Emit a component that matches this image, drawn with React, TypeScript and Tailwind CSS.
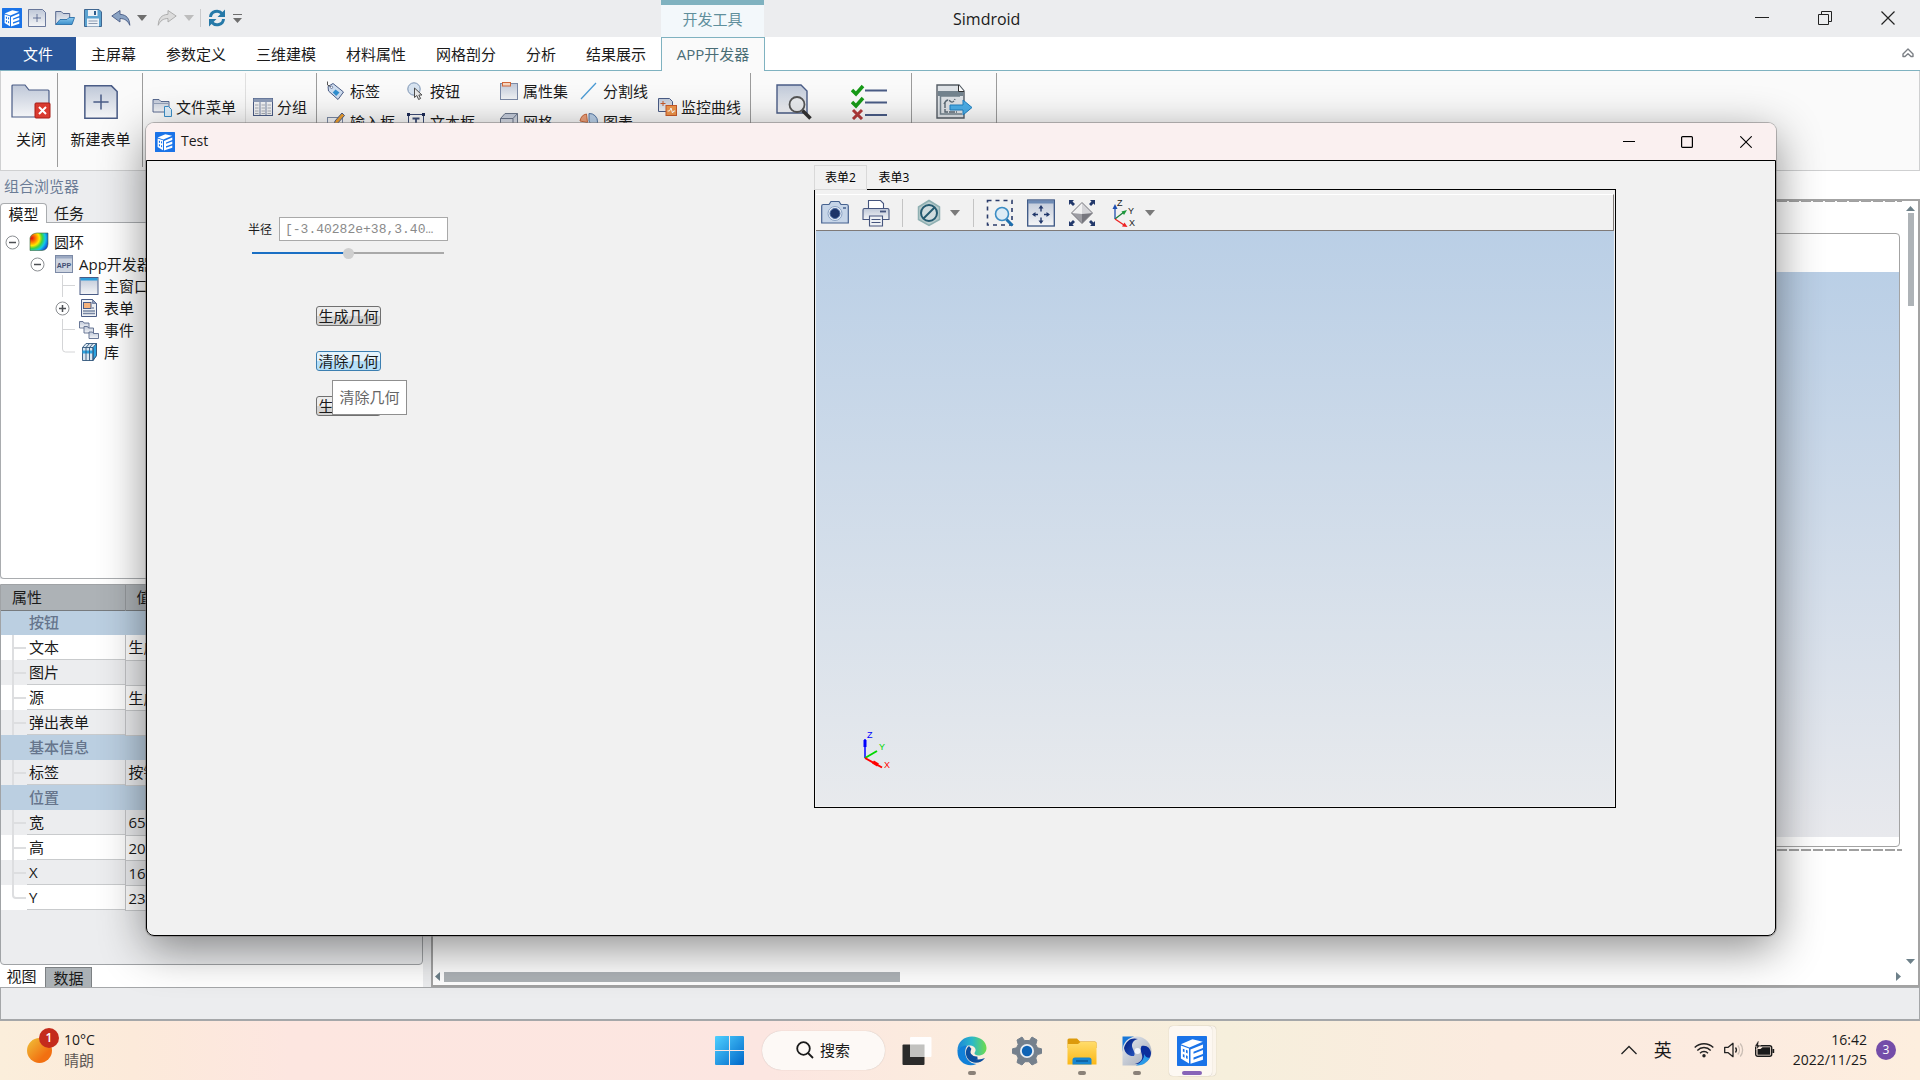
import type { ReactNode } from 'react'

type IconProps = { className?: string }

const NAVY = '#4a5c86'
const CAPTION = 'flex items-center justify-center'

const MENU = ['主屏幕', '参数定义', '三维建模', '材料属性', '网格剖分', '分析', '结果展示']

type PropRow = { name: string; value?: string; group?: boolean; white?: boolean; last?: boolean }

const PROPS: PropRow[] = [
  { name: '按钮', group: true },
  { name: '文本', value: '生成几何', white: true },
  { name: '图片', value: '' },
  { name: '源', value: '生成几何', white: true },
  { name: '弹出表单', value: '' },
  { name: '基本信息', group: true },
  { name: '标签', value: '按钮' },
  { name: '位置', group: true },
  { name: '宽', value: '65' },
  { name: '高', value: '20', white: true },
  { name: 'X', value: '16' },
  { name: 'Y', value: '23', white: true, last: true },
]

export default function App() {
  return (
    <div className="relative flex h-screen min-h-[900px] flex-col overflow-hidden bg-white font-['Open_Sans','Noto_Sans_CJK_SC',sans-serif] text-[15px] leading-5 text-[#1a1a1a]">
      <Gradients />
      <TitleBar />
      <MenuTabs />
      <Ribbon />
      <div className="flex min-h-0 flex-1">
        <Browser />
        <div className="w-[8px] shrink-0 bg-[#ecedef]" />
        <Designer />
      </div>
      <div className="h-[34px] shrink-0 border border-b-2 border-[#a5a7a9] bg-[#ecedef]" />
      <Taskbar />
      <TestWindow />
    </div>
  )
}

/* ---------- main window frame ---------- */

function TitleBar() {
  return (
    <header className="flex h-[37px] shrink-0 bg-[#ecedef]">
      <div className="flex w-[661px] shrink-0 items-center pb-px pl-[2px]">
        <Logo className="h-5 w-5" />
        <button aria-label="新建" className="ml-[5px]"><NewIcon className="h-5 w-5" /></button>
        <button aria-label="打开" className="ml-2"><OpenIcon className="h-5 w-5" /></button>
        <button aria-label="保存" className="ml-2"><SaveIcon className="h-5 w-5" /></button>
        <button aria-label="撤销" className="ml-2"><UndoIcon className="h-5 w-5" /></button>
        <button aria-label="撤销列表" className="ml-[6px]"><Caret className="h-[6px] w-[10px] text-[#6e6e6e]" /></button>
        <button aria-label="重做" className="ml-[10px]"><RedoIcon className="h-5 w-5" /></button>
        <button aria-label="重做列表" className="ml-[7px]"><Caret className="h-[6px] w-[10px] text-[#bdbdbd]" /></button>
        <span className="ml-[6px] h-[18px] w-px bg-[#c9cacc]" />
        <button aria-label="刷新" className="ml-[6px]"><RefreshIcon className="h-5 w-5" /></button>
        <button aria-label="自定义工具栏" className="ml-[6px] flex flex-col items-center gap-[3px]">
          <span className="h-px w-[9px] bg-[#6e6e6e]" />
          <Caret className="h-[5px] w-[9px] text-[#6e6e6e]" />
        </button>
      </div>
      <div className="flex w-[103px] shrink-0 items-center justify-center border-t-[5px] border-[#7fb2c0] bg-[#f3f8fb] pb-1 text-[#5f8f9c]">
        开发工具
      </div>
      <h1 className="flex-1 self-center pl-[189px] text-base">Simdroid</h1>
      <div className="flex pr-px pb-px">
        <button aria-label="最小化" className={`${CAPTION} w-[63px]`}>
          <svg viewBox="0 0 14 14" className="h-[14px] w-[14px]"><path d="M0 6.5h14" stroke="#222" /></svg>
        </button>
        <button aria-label="还原" className={`${CAPTION} w-[63px]`}>
          <svg viewBox="0 0 14 14" className="h-[14px] w-[14px]" fill="none" stroke="#222">
            <path d="M.5 3.5h10v10H.5zM3.5 3.5v-3h10v10h-3" />
          </svg>
        </button>
        <button aria-label="关闭窗口" className={`${CAPTION} w-[63px]`}>
          <svg viewBox="0 0 14 14" className="h-[14px] w-[14px]"><path d="M.5.5l13 13M13.5.5l-13 13" stroke="#222" strokeWidth="1.2" /></svg>
        </button>
      </div>
    </header>
  )
}

function MenuTabs() {
  return (
    <nav className="flex h-[34px] shrink-0 bg-white">
      <button className="w-[76px] border-b border-[#7fb2c0] bg-[#2b579a] text-white">文件</button>
      {MENU.map((m) => (
        <button key={m} className="border-b border-[#7fb2c0] px-[15px]">{m}</button>
      ))}
      <button className="w-[104px] border border-b-0 border-[#7fb2c0] bg-[#fafafa] pb-[2px] text-[#4a6d76]">APP开发器</button>
      <div className="flex flex-1 items-center justify-end border-b border-[#7fb2c0] pr-[6px] pb-[2px]">
        <button aria-label="收起功能区">
          <svg viewBox="0 0 12 10" className="h-[10px] w-3" fill="none" stroke="#7b7f85" strokeWidth="1.4">
            <path d="M1 6 6 1l5 5v2.5H9L6 5.800 3 8.500H1z" strokeLinejoin="round" />
          </svg>
        </button>
      </div>
    </nav>
  )
}

function Ribbon() {
  return (
    <div className="flex h-[100px] shrink-0 border border-t-0 border-[#cfd0d1] bg-[#fafafa] py-[2px]">
      <Group className="w-[57px] pl-1">
        <BigTool label="关闭" icon={<FolderCloseIcon className="h-9 w-10" />} />
      </Group>
      <Group className="w-[85px] pl-px">
        <BigTool label="新建表单" icon={<NewIcon className="h-[38px] w-[38px]" />} />
      </Group>
      <Group className="w-[174px]">
        <div className="flex h-[68px] w-[103px] items-center border-r border-[#e0e0e0] pl-[9px]">
          <Tool label="文件菜单" icon={<FileMenuIcon className="h-5 w-5" />} />
        </div>
        <div className="flex h-[68px] items-center pl-[7px]">
          <Tool label="分组" icon={<ColumnsIcon className="h-5 w-5" />} />
        </div>
      </Group>
      <Group className="w-[434px] pl-[9px]">
        <div className="grid h-[66px] auto-rows-[31px] grid-cols-[80px_93px_80px_78px] pt-[2px]">
          <Tool label="标签" icon={<TagIcon className="h-5 w-5" />} />
          <Tool label="按钮" icon={<PointerIcon className="h-5 w-5" />} />
          <Tool label="属性集" icon={<PropSetIcon className="h-5 w-5" />} />
          <Tool label="分割线" icon={<SplitLineIcon className="h-5 w-5" />} />
          <Tool label="输入框" icon={<InputIcon className="h-5 w-5" />} />
          <Tool label="文本框" icon={<TextBoxIcon className="h-5 w-5" />} />
          <Tool label="网格" icon={<MeshIcon className="h-5 w-5" />} />
          <Tool label="图表" icon={<ChartIcon className="h-5 w-5" />} />
        </div>
        <div className="flex h-[68px] items-center">
          <Tool label="监控曲线" icon={<MonitorIcon className="h-5 w-5" />} />
        </div>
      </Group>
      <Group className="w-[161px] px-[5px]">
        <BigTool title="预览" icon={<PreviewIcon className="h-9 w-9" />} />
        <BigTool title="检查" icon={<ChecklistIcon className="h-9 w-9" />} />
      </Group>
      <Group className="w-[85px]">
        <BigTool title="导出" icon={<ExportIcon className="h-9 w-9" />} />
      </Group>
    </div>
  )
}

function Group({ className, children }: { className: string; children: ReactNode }) {
  return <div className={`flex h-[94px] shrink-0 border-r border-[#9c9c9c] ${className}`}>{children}</div>
}

function BigTool({ label, title, icon }: { label?: string; title?: string; icon: ReactNode }) {
  return (
    <button aria-label={label ?? title} className="flex flex-1 flex-col items-center whitespace-nowrap pt-[9px]">
      <span className="flex h-10 items-center">{icon}</span>
      {label && <span className="mt-[7px]">{label}</span>}
    </button>
  )
}

function Tool({ label, icon }: { label: string; icon: ReactNode }) {
  return (
    <button className="flex items-center gap-1 whitespace-nowrap">
      {icon}
      {label}
    </button>
  )
}

/* ---------- left column ---------- */

function Browser() {
  return (
    <aside className="flex w-[423px] shrink-0 flex-col">
      <div className="flex min-h-0 flex-1 flex-col bg-[#ecedef]">
        <h2 className="flex h-8 items-center pb-[3px] pl-1 text-[#6b7c96]">组合浏览器</h2>
        <div className="flex h-5 shrink-0">
          <button className="w-[47px] rounded-t-sm border border-b-0 border-[#a9acaf] bg-white">模型</button>
          <button className="border-b border-[#a9acaf] px-[7px]">任务</button>
          <span className="flex-1 border-b border-[#a9acaf]" />
        </div>
        <ul className="min-h-0 flex-1 rounded-b-sm border border-t-0 border-[#a9acaf] bg-white pt-[8px]">
          <li className="flex h-[22px] items-center pl-1">
            <Expander open />
            <ContourIcon className="ml-[9px] h-5 w-5" />
            <span className="ml-[5px]">圆环</span>
          </li>
          <li className="flex h-[22px] items-center pl-[29px]">
            <Expander open />
            <AppIcon className="ml-[9px] h-5 w-5" />
            <span className="ml-[5px] whitespace-nowrap">App开发器</span>
          </li>
          <Leaf label="主窗口" icon={<WindowIcon className="h-5 w-5" />} />
          <li className="flex h-[22px] items-center pl-[54px]">
            <Expander />
            <FormIcon className="ml-[9px] h-5 w-5" />
            <span className="ml-[5px]">表单</span>
          </li>
          <Leaf label="事件" icon={<EventIcon className="h-5 w-5" />} />
          <Leaf label="库" last icon={<LibraryIcon className="h-5 w-5" />} />
        </ul>
      </div>
      <div className="mt-[5px] flex min-h-[381px] shrink-0 flex-col rounded-b-sm border border-[#a0a3a6] bg-[#ecedef]">
        <table className="w-full table-fixed border-collapse text-left">
          <thead>
            <tr className="h-[25px] border-b border-[#777b7e] bg-[#adb2b6]">
              <th className="w-[124px] border-r border-[#95999c] p-0 pl-[11px] font-normal">属性</th>
              <th className="p-0 pl-[11px] font-normal">值</th>
            </tr>
          </thead>
          <tbody>
            {PROPS.map((p) =>
              p.group ? (
                <tr key={p.name} className="h-[25px] bg-[#bbcfe1] text-[#66758c]">
                  <th colSpan={2} className="p-0 pb-px pl-7 font-medium">{p.name}</th>
                </tr>
              ) : (
                <tr key={p.name} className={p.white ? 'h-[25px] bg-white' : 'h-[25px] bg-[#ecedef]'}>
                  <td className="border-r border-[#c3c5c7] p-0">
                    <div className="flex h-[25px]">
                      <TreeLine last={p.last} />
                      <span className="flex flex-1 items-center border-b border-[#c9cbcd] pl-[2px]">{p.name}</span>
                    </div>
                  </td>
                  <td className="border-b border-[#c9cbcd] p-0 pl-[3px]">{p.value}</td>
                </tr>
              ),
            )}
          </tbody>
        </table>
      </div>
      <div className="flex h-[22px] shrink-0 bg-white">
        <button className="w-[45px] pr-[2px]">视图</button>
        <button className="mt-[2px] w-[47px] border border-b-0 border-[#7c8083] bg-[#abb1b5]">数据</button>
      </div>
    </aside>
  )
}

function TreeLine({ last }: { last?: boolean }) {
  return (
    <svg viewBox="0 0 26 25" className="h-[25px] w-[26px] shrink-0" fill="none" stroke="#dddee0" strokeWidth="2">
      {last ? <path d="M12 0v10q0 3 3 3h10" /> : <path d="M12 0v25M12 13h13" />}
    </svg>
  )
}

function Leaf({ label, icon, last }: { label: string; icon: ReactNode; last?: boolean }) {
  return (
    <li className="flex h-[22px] items-center pl-[60px]">
      <svg viewBox="0 0 16 22" className="h-[22px] w-4" fill="none" stroke="#d4d5d7">
        {last ? <path d="M1.500 0v8q0 3 3 3H14" /> : <path d="M1.500 0v22M1.500 10.500H14" />}
      </svg>
      <span className="ml-[2px]">{icon}</span>
      <span className="ml-[5px]">{label}</span>
    </li>
  )
}

function Expander({ open }: { open?: boolean }) {
  return (
    <button aria-label={open ? '折叠' : '展开'}>
      <svg viewBox="0 0 15 15" className="h-[15px] w-[15px]" fill="none">
        <circle cx="7.500" cy="7.500" r="6.500" fill="#fff" stroke="#8c8f93" />
        <path d={open ? 'M4 7.500h7' : 'M4 7.500h7M7.500 4v7'} stroke="#4c4f53" strokeWidth="1.500" />
      </svg>
    </button>
  )
}

/* ---------- form designer behind the dialog ---------- */

function Designer() {
  return (
    <main className="flex min-w-0 flex-1 flex-col bg-white pt-7">
      <div className="flex min-h-0 flex-1 flex-col border-2 border-[#a3a3a3]">
        <div className="flex min-h-0 flex-1">
          <div className="flex flex-1 flex-col">
            <div className="h-px bg-[repeating-linear-gradient(90deg,#a0a0a0_0_10px,transparent_10px_12px)]" />
            <div className="mt-[31px] mr-[2px] flex flex-1 flex-col rounded-sm border border-[#a3a3a3] bg-white pt-[38px] pb-[9px]">
              <div className="flex-1 bg-linear-to-b from-[#bacfe6] to-[#e8e9ed]" />
            </div>
            <div className="mt-[2px] mb-[117px] h-[2px] bg-[repeating-linear-gradient(90deg,#a0a0a0_0_10px,transparent_10px_12px)]" />
          </div>
          <div className="flex w-4 flex-col items-center pt-[5px] pb-1 pl-px">
            <Caret className="h-[5px] w-[9px] rotate-180 text-[#6d8089]" />
            <span className="mt-[2px] h-[93px] w-[6px] bg-[#aeb3b7]" />
            <Caret className="mt-auto h-[5px] w-[9px] text-[#6d8089]" />
          </div>
        </div>
        <div className="flex h-[17px] items-center justify-between pr-[15px]">
          <div className="flex items-center gap-[2px]">
            <Caret className="h-[5px] w-[9px] rotate-90 text-[#6d8089]" />
            <span className="h-[10px] w-[456px] bg-[#aeb3b7]" />
          </div>
          <Caret className="h-[5px] w-[9px] -rotate-90 text-[#6d8089]" />
        </div>
      </div>
    </main>
  )
}

/* ---------- Test dialog ---------- */

function TestWindow() {
  return (
    <section
      aria-label="Test"
      className="absolute top-[123px] right-[144px] bottom-[144px] left-[146px] flex flex-col rounded-lg bg-[#f1f1f1] shadow-[0_0_0_1px_rgba(120,115,115,0.5),0_12px_46px_rgba(0,0,0,0.46)]"
    >
      <div className="flex h-[37px] shrink-0 items-center rounded-t-lg bg-[#faf0f0] pl-[9px]">
        <Logo className="h-5 w-5" />
        <h2 className="ml-[6px] flex-1 pb-px text-sm">Test</h2>
        <button aria-label="最小化" className={`${CAPTION} h-full w-[58px]`}>
          <svg viewBox="0 0 12 12" className="h-3 w-3"><path d="M0 5.500h12" stroke="#000" /></svg>
        </button>
        <button aria-label="最大化" className={`${CAPTION} h-full w-[58px]`}>
          <svg viewBox="0 0 12 12" className="h-3 w-3"><rect x=".6" y=".6" width="10.800" height="10.800" rx="1" fill="none" stroke="#000" strokeWidth="1.200" /></svg>
        </button>
        <button aria-label="关闭" className={`${CAPTION} h-full w-[60px]`}>
          <svg viewBox="0 0 12 12" className="h-3 w-3"><path d="M.3.3l11.400 11.400M11.700.3.300 11.700" stroke="#000" strokeWidth="1.100" /></svg>
        </button>
      </div>
      <div className="flex min-h-0 flex-1 rounded-b-lg border border-black">
        <RadiusForm />
        <ViewTabs />
      </div>
    </section>
  )
}

function RadiusForm() {
  return (
    <form className="flex w-[667px] shrink-0 flex-col items-start pt-14 pl-[101px]">
      <div className="flex items-center gap-[7px]">
        <label htmlFor="radius" className="pt-px text-xs">半径</label>
        <input
          id="radius"
          readOnly
          value="[-3.40282e+38,3.40…"
          className="h-6 w-[169px] border border-[#a9a9a9] bg-white px-[5px] font-['Liberation_Mono','Noto_Sans_CJK_SC',monospace] text-[13px] text-[#8a8a8a]"
        />
      </div>
      <input
        type="range"
        aria-label="半径"
        defaultValue={50}
        className="mt-[6px] ml-1 h-3 w-48 appearance-none bg-[linear-gradient(90deg,#1a6fc4_50%,#a9a9a9_50%)] bg-[length:100%_2px] bg-center bg-no-repeat [&::-webkit-slider-thumb]:h-[11px] [&::-webkit-slider-thumb]:w-[11px] [&::-webkit-slider-thumb]:appearance-none [&::-webkit-slider-thumb]:rounded-full [&::-webkit-slider-thumb]:bg-[#cfcfcf]"
      />
      <div className="relative mt-[47px] ml-[68px] flex flex-col items-start gap-[25px]">
        <FormButton>生成几何</FormButton>
        <FormButton hot>清除几何</FormButton>
        <FormButton>生成网格</FormButton>
        <div role="tooltip" className="absolute top-[74px] left-4 flex h-[35px] w-[75px] items-center justify-center border border-[#8f8f8f] bg-white pb-[2px] whitespace-nowrap text-[#666]">
          清除几何
        </div>
      </div>
    </form>
  )
}

function FormButton({ hot, children }: { hot?: boolean; children: ReactNode }) {
  return (
    <button
      type="button"
      className={
        hot
          ? 'flex h-5 w-[65px] items-center justify-center rounded-[3px] border border-[#3c7fb1] bg-[linear-gradient(#e4f3fc_50%,#b5dff8_50%)] whitespace-nowrap'
          : 'flex h-5 w-[65px] items-center justify-center rounded-[3px] border border-[#707070] bg-[linear-gradient(#ededed_50%,#d3d3d3_50%)] whitespace-nowrap'
      }
    >
      {children}
    </button>
  )
}

function ViewTabs() {
  return (
    <div className="mt-1 mr-[159px] mb-[127px] flex min-w-0 flex-1 flex-col">
      <div className="flex h-[25px] shrink-0 text-xs text-black">
        <button className="w-[53px] border border-[#d9d9d9] pt-px">表单2</button>
        <button className="w-[54px] border-b border-black pt-[2px]">表单3</button>
        <span className="flex-1 border-b border-black" />
      </div>
      <div className="flex min-h-0 flex-1 flex-col border border-t-0 border-black px-px pt-1 pb-px">
        <div className="flex h-[37px] shrink-0 items-center border-t border-r border-b border-[#7f7a78] border-t-white pl-[5px]">
          <button aria-label="截图"><CameraIcon className="h-7 w-7" /></button>
          <button aria-label="打印" className="ml-[13px]"><PrinterIcon className="h-7 w-7" /></button>
          <span className="ml-3 h-7 w-px bg-[#c4c4c4]" />
          <button aria-label="隐藏" className="ml-3"><HideIcon className="h-7 w-7" /></button>
          <button aria-label="隐藏选项" className="ml-[7px]"><Caret className="h-[6px] w-[10px] text-[#7a7a7a]" /></button>
          <span className="ml-[13px] h-7 w-px bg-[#c4c4c4]" />
          <button aria-label="框选缩放" className="ml-3"><ZoomBoxIcon className="h-7 w-7" /></button>
          <button aria-label="适应窗口" className="ml-[13px]"><FitIcon className="h-7 w-7" /></button>
          <button aria-label="旋转" className="ml-[13px]"><ExpandIcon className="h-7 w-7" /></button>
          <button aria-label="视角" className="ml-[13px]"><AxesIcon className="h-7 w-7" /></button>
          <button aria-label="视角选项" className="ml-2"><Caret className="h-[6px] w-[10px] text-[#7a7a7a]" /></button>
        </div>
        <div className="flex flex-1 flex-col justify-end bg-linear-to-b from-[#bacfe6] to-[#e8eaed] pb-9 pl-[45px]">
          <svg viewBox="0 0 32 40" className="h-10 w-8 font-['Liberation_Sans',sans-serif]" fontSize="9">
            <path d="M4 28V9" stroke="#3c3cff" strokeWidth="2" />
            <path d="M4 17v-7" stroke="#00f" strokeWidth="3" />
            <path d="M4 28l12-7" stroke="#00d800" strokeWidth="2" />
            <path d="M4 28l17 9.500" stroke="#f00" strokeWidth="2" />
            <path d="M12 32l5 3" stroke="#f00" strokeWidth="3.500" />
            <text x="6" y="8" fill="#00f">Z</text>
            <text x="18" y="20" fill="#00d800">Y</text>
            <text x="23" y="38" fill="#f00">X</text>
          </svg>
        </div>
      </div>
    </div>
  )
}

/* ---------- taskbar ---------- */

function Taskbar() {
  return (
    <footer className="flex h-[59px] shrink-0 items-center bg-[linear-gradient(90deg,#fbeedb_0%,#fceada_7%,#fde6e0_15%,#fce6e1_40%,#fbecde_50%,#f6efdc_64%,#fbebdf_78%,#fcebe0_90%,#fdeede_100%)]">
      <div className="flex flex-1 items-center pb-[2px] pl-[25px]">
        <div className="relative mb-2 h-9 w-[34px]">
          <svg viewBox="0 0 34 36" className="h-9 w-[34px]">
            <circle cx="14.500" cy="22.500" r="12.500" fill="url(#sun)" />
          </svg>
          <span className="absolute top-0 right-0 flex h-5 w-5 items-center justify-center rounded-full bg-[#c42b1c] text-xs font-semibold text-white">1</span>
        </div>
        <div className="ml-[5px] text-sm leading-5">
          <div>10°C</div>
          <div className="text-[15px] text-[#5f5a56]">晴朗</div>
        </div>
      </div>

      <div className="flex items-center">
        <TaskButton label="开始">
          <svg viewBox="0 0 28 28" className="h-[29px] w-[29px]" fill="url(#win)">
            <path d="M0 1q0-1 1-1h12.500v13.500H0zM14.500 0H27q1 0 1 1v12.500H14.500zM0 14.500h13.500V28H1q-1 0-1-1zM14.500 14.500H28V27q0 1-1 1H14.500z" />
          </svg>
        </TaskButton>
        <button className="mx-[5px] flex h-[39px] w-[123px] items-center justify-center gap-[6px] rounded-full bg-[#fdf9f6] pb-px shadow-[0_0_1px_rgba(0,0,0,0.25)]">
          <svg viewBox="0 0 18 18" className="h-[18px] w-[18px]" fill="none" stroke="#1a1a1a" strokeWidth="1.800">
            <circle cx="7.500" cy="7.500" r="6.300" />
            <path d="M12 12l5 5" />
          </svg>
          搜索
        </button>
        <TaskButton label="任务视图">
          <svg viewBox="0 0 30 30" className="h-[30px] w-[30px]">
            <rect x=".5" y="8.500" width="22" height="20.500" rx="1" fill="#2b2b2b" />
            <rect x="8" y="1" width="21.500" height="20" rx="1" fill="#fff" opacity=".95" />
            <path d="M8 8.500h14.500V21H8z" fill="#c2c2c0" />
          </svg>
        </TaskButton>
        <TaskButton label="Microsoft Edge" running><EdgeIcon className="h-[30px] w-[30px]" /></TaskButton>
        <TaskButton label="设置"><GearIcon className="h-[30px] w-[30px]" /></TaskButton>
        <TaskButton label="文件资源管理器" running><ExplorerIcon className="h-[30px] w-[30px]" /></TaskButton>
        <TaskButton label="Simdroid 启动器" running><SwirlIcon className="h-[30px] w-[30px]" /></TaskButton>
        <TaskButton label="Simdroid" active><Logo className="h-[30px] w-[30px]" /></TaskButton>
      </div>

      <div className="flex flex-1 items-center justify-end pr-6 pb-[2px]">
        <button aria-label="显示隐藏的图标">
          <svg viewBox="0 0 16 10" className="h-[10px] w-4" fill="none" stroke="#222" strokeWidth="1.300"><path d="M.5 9 8 1.500 15.500 9" /></svg>
        </button>
        <button className="ml-[17px] text-lg">英</button>
        <svg viewBox="0 0 20 16" className="ml-[22px] h-4 w-5" fill="none" stroke="#222" strokeWidth="1.400">
          <path d="M.7 5.600a13 13 0 0 1 18.600 0M3.300 8.400a9.300 9.300 0 0 1 13.400 0M6 11.200a5.600 5.600 0 0 1 8 0" />
          <circle cx="10" cy="13.800" r="1.700" fill="#222" stroke="none" />
        </svg>
        <svg viewBox="0 0 20 16" className="ml-[10px] h-4 w-5" fill="none" stroke="#222" strokeWidth="1.300">
          <path d="M.7 5.300h3.500L9 1.300v13.400l-4.800-4H.7z" strokeLinejoin="round" />
          <path d="M11.500 5.500a4 4 0 0 1 0 5" />
          <path d="M13.800 3.500a7 7 0 0 1 0 9M16.200 1.500a10 10 0 0 1 0 13" stroke="#c9bdb4" />
        </svg>
        <svg viewBox="0 0 21 17" className="ml-[10px] h-[17px] w-[21px]">
          <rect x="1.700" y="4.700" width="16" height="10.600" rx="2" fill="none" stroke="#1a1a1a" strokeWidth="1.400" />
          <path d="M3.500 8h3l2-1.800h7.700v7.500H3.500zM18.500 8h1.700v4h-1.700z" fill="#1a1a1a" />
          <path d="M4 0 .7 5.300H3L2.200 9l4.300-5H4.200L5 0z" fill="#1a1a1a" stroke="#fcebe0" strokeWidth=".5" />
        </svg>
        <div className="ml-[18px] text-right text-sm leading-5">
          <div>16:42</div>
          <div>2022/11/25</div>
        </div>
        <span className="ml-[9px] flex h-5 w-5 items-center justify-center rounded-full bg-[#744da9] text-xs text-white">3</span>
      </div>
    </footer>
  )
}

function TaskButton({ label, running, active, children }: { label: string; running?: boolean; active?: boolean; children: ReactNode }) {
  return (
    <button aria-label={label} className="relative flex h-[59px] w-[55px] items-center justify-center">
      {active && (
        <>
          <span className="absolute top-[5px] right-1 h-[50px] w-10 rounded bg-[#fbf5ec] shadow-[0_0_1px_rgba(0,0,0,0.3)]" />
          <span className="absolute top-[5px] left-1 h-[50px] w-[43px] rounded bg-[#fdf8f2] shadow-[0_0_1px_rgba(0,0,0,0.3)]" />
        </>
      )}
      <span className="relative">{children}</span>
      {running && <span className="absolute bottom-[5px] h-1 w-2 rounded-full bg-[#8a8178]" />}
      {active && <span className="absolute bottom-[5px] h-1 w-5 rounded-full bg-[#8764b8]" />}
    </button>
  )
}

/* ---------- icons ---------- */

function Gradients() {
  return (
    <svg aria-hidden className="absolute h-0 w-0">
      <defs>
        <linearGradient id="steel" x1="0" y1="0" x2="0" y2="1"><stop offset="0" stopColor="#bfc8d8" /><stop offset="1" stopColor="#f4f5f7" /></linearGradient>
        <linearGradient id="blue" x1="0" y1="0" x2="0" y2="1"><stop offset="0" stopColor="#8cc9ee" /><stop offset="1" stopColor="#3a8fcb" /></linearGradient>
        <linearGradient id="sun" x1="0" y1="0" x2="1" y2="1"><stop offset="0" stopColor="#efc33a" /><stop offset=".7" stopColor="#f27011" /></linearGradient>
        <linearGradient id="win" gradientUnits="userSpaceOnUse" x1="0" y1="0" x2="28" y2="28"><stop offset="0" stopColor="#4fd0ff" /><stop offset="1" stopColor="#0067c9" /></linearGradient>
        <linearGradient id="folder" x1="0" y1="0" x2="0" y2="1"><stop offset="0" stopColor="#ffdc6b" /><stop offset="1" stopColor="#fbb716" /></linearGradient>
        <linearGradient id="edgeTop" x1="0" y1="0" x2="1" y2="0"><stop offset="0" stopColor="#1c86d8" /><stop offset=".5" stopColor="#2bb8c9" /><stop offset="1" stopColor="#6fdc4c" /></linearGradient>
        <linearGradient id="silver" x1="0" y1="0" x2="1" y2="1"><stop offset="0" stopColor="#e7eaf0" /><stop offset="1" stopColor="#9fa7b5" /></linearGradient>
        <linearGradient id="navy" x1="0" y1="0" x2="1" y2="1"><stop offset="0" stopColor="#001a7a" /><stop offset="1" stopColor="#2a5cc8" /></linearGradient>
        <radialGradient id="contour" cx=".1" cy=".3" r="1"><stop offset="0" stopColor="#e01010" /><stop offset=".25" stopColor="#ff8a00" /><stop offset=".42" stopColor="#ffe800" /><stop offset=".58" stopColor="#3fd43f" /><stop offset=".75" stopColor="#10c8e8" /><stop offset="1" stopColor="#1230d8" /></radialGradient>
      </defs>
    </svg>
  )
}

function Logo({ className }: IconProps) {
  return (
    <svg viewBox="0 0 20 20" className={className}>
      <rect width="20" height="20" rx=".5" fill="#1a73e8" />
      <path d="M2.600 5.500 10.300 2.200l6.900 1.600L8.300 7.600z" fill="#fff" />
      <path d="M2.600 6.400 8 8.300v10L2.600 15z" fill="#fff" />
      <path d="M3.900 8.500l1.100.4v2l-1.100-.5zM3.900 12l1.100.5v2l-1.100-.7zM6 9.200l1.100.4v2L6 11.200zM6 12.900l1.100.5v2L6 14.800z" fill="#1a73e8" />
      <path d="M9 9l8.300-3.400V8L11 10.500v1.300l6.300-2.400V12L11 14.300v1.500l6.300-2.400v2.400L9 18.500z" fill="#fff" />
    </svg>
  )
}

function Caret({ className }: IconProps) {
  return <svg viewBox="0 0 10 6" preserveAspectRatio="none" className={className}><path d="M0 0h10L5 6z" fill="currentColor" /></svg>
}

function NewIcon({ className }: IconProps) {
  return (
    <svg viewBox="0 0 20 20" className={className} fill="url(#steel)" stroke={NAVY} strokeWidth=".8">
      <path d="M1.500 1.500h14l3 3v14h-17z" />
      <path d="M10 6v8M6 10h8" />
    </svg>
  )
}

function OpenIcon({ className }: IconProps) {
  return (
    <svg viewBox="0 0 20 20" className={className} stroke={NAVY} strokeWidth=".9">
      <path d="M.700 16.500v-13h5.500l2 2h6.500v6" fill="url(#steel)" />
      <path d="M.700 16.500 5 11.500h7l2-2h5.500L17 16.500z" fill="url(#blue)" stroke="#2a6fa8" />
    </svg>
  )
}

function SaveIcon({ className }: IconProps) {
  return (
    <svg viewBox="0 0 20 20" className={className}>
      <path d="M1.500 1.500h14.500l2.500 2.500v14.500h-17z" fill="#5ba3d0" stroke="#3f6690" />
      <rect x="5" y="2" width="9.500" height="6" fill="#eef2f6" />
      <path d="M11 3h2v4h-2z" fill="#2f5d8c" />
      <rect x="4" y="10.500" width="12" height="8" fill="#eef2f6" />
      <path d="M5.500 13h9M5.500 15.500h9" stroke="#8b9ab0" />
    </svg>
  )
}

function UndoIcon({ className }: IconProps) {
  return (
    <svg viewBox="0 0 20 20" className={className}>
      <path d="M.800 8 9 2.500v3.800c6.500.5 9.500 4 9.800 11C16.500 12.500 14 10.700 9 10.500V14z" fill="#8aa3c4" stroke={NAVY} strokeWidth=".9" strokeLinejoin="round" />
    </svg>
  )
}

function RedoIcon({ className }: IconProps) {
  return (
    <svg viewBox="0 0 20 20" className={className}>
      <path d="M19.200 8 11 2.500v3.800c-6.500.5-9.500 4-9.800 11 2.300-4.800 4.800-6.600 9.800-6.800V14z" fill="#dcdcdc" stroke="#a8a8a8" strokeWidth=".9" strokeLinejoin="round" />
    </svg>
  )
}

function RefreshIcon({ className }: IconProps) {
  return (
    <svg viewBox="0 0 20 20" className={className} fill="none" stroke="#2679a8" strokeWidth="3">
      <path d="M3.500 9c.3-6 8-7.500 11.500-3.500" />
      <path d="M16.500 11c-.3 6-8 7.500-11.500 3.500" />
      <path d="M18 1.500V9h-7.500zM2 18.500V11h7.500z" fill="#2679a8" stroke="none" />
    </svg>
  )
}

function FolderCloseIcon({ className }: IconProps) {
  return (
    <svg viewBox="0 0 40 36" className={className}>
      <path d="M1 33V2q0-1 1-1h12l4 5h19q1 0 1 1v26z" fill="url(#steel)" stroke={NAVY} strokeWidth="1.200" />
      <rect x="24" y="19" width="15" height="15" rx="1" fill="#d93a2f" stroke="#a81d16" />
      <path d="M28 23l7 7M35 23l-7 7" stroke="#fff" strokeWidth="2" />
    </svg>
  )
}

function FileMenuIcon({ className }: IconProps) {
  return (
    <svg viewBox="0 0 20 20" className={className}>
      <path d="M1 15V2.500h6l2 2h8V15z" fill="url(#steel)" stroke={NAVY} strokeWidth=".9" />
      <path d="M1 6.500h16" stroke="#93a0b8" />
      <path d="M12.500 9.500h4l3 3v7h-7z" fill="#dff0fb" stroke="#3b8fc8" />
    </svg>
  )
}

function ColumnsIcon({ className }: IconProps) {
  return (
    <svg viewBox="0 0 20 20" className={className}>
      <rect x=".5" y="1.500" width="19" height="17" fill="#f2f3f5" stroke={NAVY} />
      <path d="M.5 1.500h19v3.500H.5z" fill="#8d9cb8" />
      <path d="M7 5v13M13 5v13" stroke="#7786a5" />
      <path d="M2 8h3.500M2 11h3.500M2 14h3.500M2 16.500h3.500M8.500 8H12M8.500 11H12M8.500 14H12M8.500 16.500H12M14.500 8H18M14.500 11H18M14.500 14H18M14.500 16.500H18" stroke="#a6abb3" />
    </svg>
  )
}

function TagIcon({ className }: IconProps) {
  return (
    <svg viewBox="0 0 20 20" className={className}>
      <path d="M2 5.500 7 2.500l10.500 8.500-5.500 7.500L2.500 10z" fill="#cfdef0" stroke={NAVY} />
      <path d="M9.500 8.500l4 3-3.300 3.500-3.500-3.500z" fill="#2f8fd0" />
      <circle cx="5.500" cy="6.300" r="1.200" fill="#fff" stroke={NAVY} strokeWidth=".7" />
      <path d="M1.500.5v3.500l3 1.500" fill="none" stroke="#555" />
    </svg>
  )
}

function PointerIcon({ className }: IconProps) {
  return (
    <svg viewBox="0 0 20 20" className={className}>
      <circle cx="8" cy="8" r="6.200" fill="#d7e3f0" stroke="#7d95b5" />
      <path d="M8.500 7v9.500l2.300-2 1.800 4 2-1-1.800-3.500H16z" fill="#e9e9e9" stroke="#4c4c4c" />
    </svg>
  )
}

function PropSetIcon({ className }: IconProps) {
  return (
    <svg viewBox="0 0 20 20" className={className}>
      <rect x="1.500" y="2.500" width="17" height="16" fill="url(#steel)" stroke="#7c8aa6" />
      <rect x="3.500" y="1.500" width="8" height="3.500" fill="#f6d5bf" stroke="#d0673a" />
    </svg>
  )
}

function SplitLineIcon({ className }: IconProps) {
  return <svg viewBox="0 0 20 20" className={className}><path d="M2 18 17 2" stroke="#4a9ad4" strokeWidth="1.200" /></svg>
}

function InputIcon({ className }: IconProps) {
  return (
    <svg viewBox="0 0 20 20" className={className}>
      <rect x="1.500" y="5.500" width="15" height="10" fill="#f4f5f7" stroke="#7c8aa6" />
      <path d="M8 13l1-4L16 1l2.500 2.500L11 12z" fill="#f0a030" stroke={NAVY} />
    </svg>
  )
}

function TextBoxIcon({ className }: IconProps) {
  return (
    <svg viewBox="0 0 20 20" className={className} fill="none" stroke="#3a4a75">
      <rect x="2.500" y="2.500" width="15" height="15" />
      <path d="M6.500 6.500h7M10 6.500v8" strokeWidth="1.800" />
      <path d="M1 1h3v3H1zM16 1h3v3h-3zM1 16h3v3H1zM16 16h3v3h-3z" fill="#1c2a55" stroke="none" />
    </svg>
  )
}

function MeshIcon({ className }: IconProps) {
  return (
    <svg viewBox="0 0 20 20" className={className} fill="url(#steel)" stroke="#6c778c">
      <path d="M1.500 6.500 6 1.500h12.500V14L14 18.500H1.500z" />
      <path d="M1.500 6.500H14v12M14 6.500l4.500-5" fill="none" />
    </svg>
  )
}

function ChartIcon({ className }: IconProps) {
  return (
    <svg viewBox="0 0 20 20" className={className}>
      <path d="M10 9V1.500a8 8 0 0 1 8.500 8.500q0 5-4 7z" fill="#bcd2ea" stroke="#5577a5" />
      <path d="M8.500 10.500 1 9q1-6 6.500-7z" fill="#f0a27c" stroke="#c9673a" />
      <path d="M8.500 11 13 18q-8 2-11.500-5z" fill="#e3e6ec" stroke="#7c8aa6" />
    </svg>
  )
}

function MonitorIcon({ className }: IconProps) {
  return (
    <svg viewBox="0 0 20 20" className={className}>
      <path d="M1.500 1.500h11l3 3v10h-14z" fill="url(#steel)" stroke={NAVY} />
      <path d="M6 4v5M3.500 6.500h5" stroke="#c85a2a" />
      <rect x="9" y="8.500" width="10.500" height="10" fill="#f0954a" stroke="#c85a2a" />
      <path d="M10.500 14h2l1.500-3 1.500 5 1.200-2h1.500" fill="none" stroke="#fff" />
    </svg>
  )
}

function PreviewIcon({ className }: IconProps) {
  return (
    <svg viewBox="0 0 36 36" className={className}>
      <path d="M1 1h24l6 6v22H1z" fill="url(#steel)" stroke={NAVY} strokeWidth="1.400" />
      <circle cx="21" cy="20.500" r="7.500" fill="#e9ebee" stroke="#555" strokeWidth="1.800" />
      <path d="M26.500 26.500l8 8" stroke="#333" strokeWidth="3.500" />
    </svg>
  )
}

function ChecklistIcon({ className }: IconProps) {
  return (
    <svg viewBox="0 0 36 36" className={className} fill="none">
      <path d="M14 6.500h22M14 18.500h22M14 31h22" stroke={NAVY} strokeWidth="2" />
      <path d="M1 6l4 4 7-8M1 18l4 4 7-8" stroke="#179a17" strokeWidth="3.500" />
      <path d="M2 26l9 9M11 26l-9 9" stroke="#b33a3a" strokeWidth="3" />
    </svg>
  )
}

function ExportIcon({ className }: IconProps) {
  return (
    <svg viewBox="0 0 36 36" className={className}>
      <path d="M1 1h22l5 6v27H1z" fill="#dfe3e7" stroke="#555d66" strokeWidth="1.400" />
      <path d="M2 7h25v5H2z" fill="#74848f" />
      <path d="M22.500 1v6.500H28" fill="#fff" stroke="#333" />
      <path d="M4.500 12v18H26M4.500 12H24" fill="none" stroke="#74848f" strokeWidth="1.500" />
      <path d="M8 20q3-6 6-3t5-2M9 18v10h12" fill="none" stroke="#5c6a75" strokeWidth="1.400" strokeDasharray="6 1" />
      <path d="M14 21h13v-5l9 7.500-9 7.500v-5H14z" fill="#4baee8" stroke="#1f7fc0" />
    </svg>
  )
}

function ContourIcon({ className }: IconProps) {
  return <svg viewBox="0 0 20 20" className={className}><path d="M1 18.500V6q1-4.500 7-5h11v11q-.5 6-6 6.500z" fill="url(#contour)" stroke="#3a6a3a" strokeWidth=".6" /></svg>
}

function AppIcon({ className }: IconProps) {
  return (
    <svg viewBox="0 0 20 20" className={className}>
      <rect x="1.500" y="1.500" width="17" height="17" fill="#cdd4e0" stroke="#7c8aa6" />
      <path d="M2 2h16v2.500H2z" fill="#9ba9c2" />
      <text x="10" y="13.500" fontSize="7" fontWeight="700" textAnchor="middle" fill="#3f4e73" className="font-['Liberation_Sans',sans-serif]">APP</text>
    </svg>
  )
}

function WindowIcon({ className }: IconProps) {
  return (
    <svg viewBox="0 0 20 20" className={className}>
      <rect x="1" y="1.500" width="18" height="17" fill="url(#steel)" stroke={NAVY} />
      <path d="M1.500 2h17v2.500h-17z" fill="#2d9ddb" />
    </svg>
  )
}

function FormIcon({ className }: IconProps) {
  return (
    <svg viewBox="0 0 20 20" className={className}>
      <path d="M2.500 1.500h11l4 4v13h-15z" fill="#eef0f3" stroke={NAVY} />
      <path d="M13.500 1.500v4h4z" fill="#8a9ab8" stroke={NAVY} strokeWidth=".6" />
      <rect x="4.500" y="4.500" width="7.500" height="6" fill="#f5b27c" stroke={NAVY} />
      <path d="M4 13h12M4 15.500h12M14 9v2" stroke="#7685a3" strokeWidth="1.300" />
    </svg>
  )
}

function EventIcon({ className }: IconProps) {
  return (
    <svg viewBox="0 0 20 20" className={className} fill="url(#steel)" stroke="#5b6b8c" strokeWidth=".9">
      <path d="M.5 8V1.500H4l1 1.500h5V8z" />
      <path d="M5 13V6.500h3.500l1 1.500h5V13z" />
      <path d="M10 18.500V12h3.500l1 1.500h5v5z" />
    </svg>
  )
}

function LibraryIcon({ className }: IconProps) {
  return (
    <svg viewBox="0 0 20 20" className={className} stroke="#31567a" strokeWidth=".9">
      <path d="M3.500 5.500 7 1.500h10.500v12L14 18.500H3.500z" fill="#d9e6f0" />
      <path d="M14 5.500l3.500-4v12L14 18.500z" fill="#2ba3e0" />
      <path d="M3.500 8.500H14v3H3.500z" fill="#2ba3e0" stroke="none" />
      <path d="M3.500 5.500H14v13M7 18.500v-13l3.500-4M10.500 18.500v-13l3.500-4" fill="none" />
    </svg>
  )
}

function CameraIcon({ className }: IconProps) {
  return (
    <svg viewBox="0 0 28 28" className={className}>
      <path d="M.7 7q0-1.500 1.500-1.500H8L10 2.500h8l2 3h5.500q1.800 0 1.800 1.500v17H.7z" fill="#c6d5e8" stroke="#46628f" strokeWidth="1.200" />
      <circle cx="14" cy="14.500" r="7" fill="#e9eff7" stroke="#8ba3c4" />
      <circle cx="14" cy="14.500" r="5" fill="#1d3468" stroke="#4a6aa0" />
      <path d="M22 9h3" stroke="#46628f" strokeWidth="1.500" />
    </svg>
  )
}

function PrinterIcon({ className }: IconProps) {
  return (
    <svg viewBox="0 0 28 28" className={className} stroke="#46557e" strokeWidth="1.100">
      <path d="M6.500 11V1.500h12l3 3V11z" fill="#fff" />
      <path d="M1 11q0-1.500 1.500-1.500h23q1.500 0 1.500 1.500v9.500H1z" fill="url(#steel)" />
      <path d="M18 12.500h6" strokeWidth="1.800" />
      <path d="M7.500 17h13v10h-13z" fill="#eef1f5" />
      <path d="M9.500 20.500h9M9.500 23.500h9" />
    </svg>
  )
}

function HideIcon({ className }: IconProps) {
  return (
    <svg viewBox="0 0 28 28" className={className} fill="none">
      <path d="M14 1.500 24.500 8v12.500L14 26.500 3.500 20.500V8z" fill="#b9cccd" stroke="#8fb0b2" strokeWidth="1.500" />
      <circle cx="14" cy="14" r="8" stroke="#245a70" strokeWidth="2" fill="#d0dcde" />
      <path d="M8.500 19.500l11-11" stroke="#245a70" strokeWidth="2" />
    </svg>
  )
}

function ZoomBoxIcon({ className }: IconProps) {
  return (
    <svg viewBox="0 0 28 28" className={className} fill="none">
      <rect x="1.500" y="1.500" width="24.500" height="24.500" stroke="#2b3c6b" strokeWidth="1.600" strokeDasharray="4 4" />
      <circle cx="16" cy="15" r="6.500" fill="#dcebf5" stroke="#3a8cc4" strokeWidth="1.600" />
      <path d="M20.500 20.500l6 6" stroke="#1d6fae" strokeWidth="3" />
    </svg>
  )
}

function FitIcon({ className }: IconProps) {
  return (
    <svg viewBox="0 0 28 28" className={className}>
      <rect x=".7" y="1" width="26.600" height="26" fill="url(#steel)" stroke="#3a5583" strokeWidth="1.300" />
      <path d="M1 1.500h26v3H1z" fill="#6e8bb5" />
      <path d="M14 8v4.500M14 18.500V23M6.500 15.500H11M17 15.500h4.500" stroke="#22386b" strokeWidth="1.400" />
      <path d="M14 6l2.500 3.500h-5zM14 25l2.500-3.500h-5zM5 15.500l3.500-2.500v5zM23 15.500l-3.500-2.500v5z" fill="#22386b" />
    </svg>
  )
}

function ExpandIcon({ className }: IconProps) {
  return (
    <svg viewBox="0 0 28 28" className={className}>
      <path d="M14 3.500V15L3.500 14z" fill="#f1f1f2" />
      <path d="M14 3.500V15l10.500-1z" fill="#d4d4d8" />
      <path d="M14 24.500V15L3.500 14z" fill="#9d9da3" />
      <path d="M14 24.500V15l10.500-1z" fill="#76767e" />
      <path d="M14 3.500 24.500 14 14 24.500 3.500 14z" fill="none" stroke="#77777d" />
      <path d="M1 1h5L4.500 2.500 7 5 5 7 2.500 4.500 1 6zM27 1h-5l1.500 1.500L21 5l2 2 2.500-2.500L27 6zM1 27h5l-1.500-1.500L7 23l-2-2-2.500 2.500L1 22zM27 27h-5l1.500-1.500L21 23l2-2 2.500 2.500L27 22z" fill="#22386b" />
    </svg>
  )
}

function AxesIcon({ className }: IconProps) {
  return (
    <svg viewBox="0 0 28 28" className={`overflow-visible font-['Liberation_Sans',sans-serif] ${className}`} fontSize="9">
      <path d="M6 20V7" stroke="#1f4fb0" strokeWidth="1.300" />
      <path d="M6 5l2.500 5h-5z" fill="#1f4fb0" />
      <path d="M6 20l9-7" stroke="#1c7d3a" strokeWidth="1.300" />
      <path d="M18 11l-3 5-2.500-3.500z" fill="#1c9a3a" />
      <path d="M6 20l9 6" stroke="#e22" strokeWidth="1.300" />
      <path d="M18.500 28l-5.500-.5 2.500-4z" fill="#e22" />
      <text x="8" y="6.500" fill="#222">Z</text>
      <text x="19" y="14.500" fill="#222">Y</text>
      <text x="20" y="27" fill="#222">X</text>
    </svg>
  )
}

function EdgeIcon({ className }: IconProps) {
  return (
    <svg viewBox="0 0 30 30" className={className}>
      <path d="M.5 16C-.2 6 7 .5 15 .5c8 0 14.500 5 14.500 11.500 0 5-4 7.500-8 7.500-3 0-5-1.500-3.500-3.500 2-3-1-6.500-5.500-6.500C7 9.500 1.500 12 .5 16z" fill="url(#edgeTop)" />
      <path d="M.5 16c.8-4.500 5.500-7 10.500-6.500-5 3-4 18 8.500 18.500-9 4-19-2-19-12z" fill="#1180d8" />
      <path d="M12 10c-4 3-4 9-1 13 4 5 12 5.500 17-1-8 3.500-16 0-14.500-6.500.3-2 1-2.500 1-2.500z" fill="#0d4f9e" />
      <path d="M12.500 12.500q-2 3 .5 6.500 3 3.500 7.500 3" fill="none" stroke="#0d4f9e" strokeWidth="3" />
    </svg>
  )
}

function GearIcon({ className }: IconProps) {
  return (
    <svg viewBox="0 0 30 30" className={className}>
      <path d="M12.500 4.500h5l2.500-3.500 5 3-1.200 4.500 1.700 3.300 4 1v4.600l-4 1.200-1.700 3.400L25 26.500 20 29l-3-3.300h-4L10 29l-5-2.500 1.200-4.500-1.700-3.400-4-1.200v-4.600l4-1 1.700-3.300L5 4l5-3z" fill="#75808c" stroke="#75808c" strokeWidth="1" strokeLinejoin="round" />
      <circle cx="15" cy="15" r="7" fill="#e9eef3" />
      <circle cx="15" cy="15" r="5.200" fill="#0f63b5" />
    </svg>
  )
}

function ExplorerIcon({ className }: IconProps) {
  return (
    <svg viewBox="0 0 30 30" className={className}>
      <path d="M.5 4q0-1.500 1.500-1.500h8l3 3h15q1.500 0 1.500 1.500v5H.5z" fill="#dc9a0b" />
      <path d="M.5 8H11l2.500-2H28q1.500 0 1.500 1.500v21H.5z" fill="url(#folder)" />
      <path d="M5.500 28.500V24q0-2.500 2.500-2.500h14q2.500 0 2.500 2.500v4.500z" fill="#1886d0" />
      <path d="M9 25h12" stroke="#0b4f8a" strokeWidth="1.200" />
    </svg>
  )
}

function SwirlIcon({ className }: IconProps) {
  return (
    <svg viewBox="0 0 30 30" className={className}>
      <path d="M.500.500H12Q2 5 .5 16z" fill="#1877d8" />
      <path d="M15 .5C6 .5.5 7 .5 15v14.500H15c8 0 14.500-6 14.500-14S23 .5 15 .5z" fill="url(#silver)" />
      <path d="M2 12C4 4 10 1 16 3c-5 1-7 5-5.500 9 1.500 3.500 3 5.500 1.500 8-5 .5-9-2.500-10-8z" fill="url(#navy)" />
      <path d="M13 28c6-1.500 8-5 7-9-1-3.500-2-6-.5-9 5-1.500 9 2 9.500 7 0 6-6 11.500-16 11z" fill="#0a2e9c" />
      <path d="M22 18q1 6-8 11.500 9 .5 14-8Q25 23 22 18z" fill="#2a9be8" />
      <circle cx="15.500" cy="15" r="3" fill="#f4f6fa" />
    </svg>
  )
}
